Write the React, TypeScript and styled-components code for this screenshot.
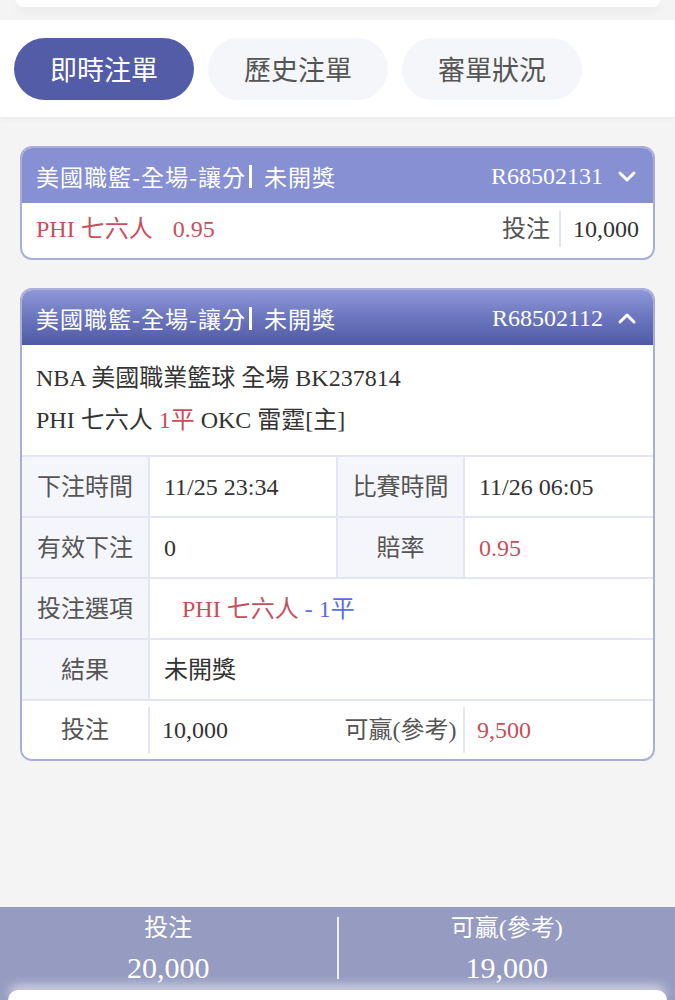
import styled, { createGlobalStyle } from 'styled-components'

const GlobalStyle = createGlobalStyle`
  * { box-sizing: border-box; }
  html, body { margin: 0; padding: 0; background: #f4f4f4; }
  body {
    font-family: "Liberation Serif", "Noto Sans CJK TC", serif;
    color: #333;
  }
`

const Page = styled.div`
  height: 1000px;
  display: flex;
  flex-direction: column;
  overflow: hidden;
  background: #f4f4f4;
`

const TopCard = styled.div`
  height: 7px;
  margin: 0 15px 13px 16px;
  background: #fff;
  border-radius: 0 0 20px 20px;
  box-shadow: 0 4px 10px rgba(0, 0, 0, 0.06);
`

const TabBar = styled.nav`
  height: 97px;
  background: #fff;
  display: flex;
  gap: 14px;
  padding: 18px 14px 0;
  box-shadow: 0 3px 6px rgba(0, 0, 0, 0.03);
`

const Tab = styled.button<{ $active?: boolean }>`
  width: 180px;
  height: 62px;
  border: none;
  border-radius: 31px;
  background: ${(p) => (p.$active ? '#535da7' : '#f5f6fa')};
  color: ${(p) => (p.$active ? '#fff' : '#555')};
  font-family: "Noto Sans CJK TC", sans-serif;
  font-size: 27px;
  line-height: 62px;
  padding: 0;
  cursor: pointer;
`

const List = styled.main`
  padding: 29px 20px 0 20px;
  display: flex;
  flex-direction: column;
  gap: 28px;
`

const Card = styled.section`
  border: 2px solid #a9aed9;
  border-radius: 12px;
  background: #fff;
  overflow: hidden;
`

const Header = styled.header<{ $open?: boolean }>`
  height: 55px;
  display: flex;
  align-items: center;
  padding: 0 14px;
  color: #fff;
  background: ${(p) =>
    p.$open ? 'linear-gradient(180deg, #8e97d8 0%, #6f79c0 45%, #4f5aa5 100%)' : '#8690d3'};
`

const Title = styled.span`
  font-family: "Noto Sans CJK TC", sans-serif;
  font-size: 23px;
  line-height: 30px;
  letter-spacing: 1px;
  flex: 1;
  white-space: nowrap;
  display: flex;
  align-items: center;
`

const Bar = styled.i`
  display: inline-block;
  width: 3px;
  height: 23px;
  background: #fff;
  margin: 2px 12px 0 3px;
`

const OrderNo = styled.span`
  font-size: 24px;
  line-height: 30px;
`

const Chevron = styled.svg`
  width: 20px;
  height: 20px;
  margin-left: 14px;
  margin-right: 2px;
`

const Summary = styled.div`
  height: 55px;
  display: flex;
  align-items: center;
  padding: 0 14px 4px;
  font-size: 24px;
  line-height: 30px;
`

const Pick = styled.span`
  color: #c64f5c;
  flex: 1;
`

const Odds = styled.span`
  margin-left: 20px;
`

const StakeLabel = styled.span`
  color: #555;
`

const VDivider = styled.span`
  width: 2px;
  height: 36px;
  background: #e2e4f3;
  margin: 0 12px 0 9px;
`

const Info = styled.div`
  height: 110px;
  padding: 12px 14px 0;
  font-size: 24px;
  line-height: 42px;
  color: #333;
`

const Red = styled.span`
  color: #c64f5c;
`

const Blue = styled.span`
  color: #5a6de6;
`

const Row = styled.div<{ $plain?: boolean }>`
  display: grid;
  grid-template-columns: 126px 190px 125px 1fr;
  height: ${(p) => (p.$plain ? '60px' : '61px')};
  border-top: 2px solid #e3e5f4;
  align-items: stretch;
  line-height: 30px;
`

const Label = styled.div<{ $plain?: boolean }>`
  display: flex;
  align-items: center;
  justify-content: center;
  background: ${(p) => (p.$plain ? '#fff' : '#f5f6fb')};
  color: #555;
  font-size: 24px;
  white-space: nowrap;
  position: relative;
`

const Value = styled.div<{ $span?: boolean; $indent?: number; $plain?: boolean; $red?: boolean }>`
  display: flex;
  align-items: center;
  padding-left: ${(p) => p.$indent ?? 14}px;
  font-size: 24px;
  color: ${(p) => (p.$red ? '#c64f5c' : '#333')};
  grid-column: ${(p) => (p.$span ? '2 / 5' : 'auto')};
  border-left: ${(p) => (p.$plain ? 'none' : '2px solid #e3e5f4')};
  border-right: ${(p) => (p.$plain ? 'none' : '2px solid #e3e5f4')};
  position: relative;
  white-space: nowrap;
  &:last-child {
    border-right: none;
  }
  ${(p) =>
    p.$plain &&
    `
    &::before {
      content: '';
      position: absolute;
      left: 0;
      top: 6px;
      bottom: 6px;
      width: 2px;
      background: #e3e5f4;
    }
  `}
`

const Spacer = styled.div`
  flex: 1;
`

const Footer = styled.footer`
  height: 93px;
  background: #959bc1;
  display: flex;
  flex-direction: column;
`

const Totals = styled.div`
  height: 83px;
  display: grid;
  grid-template-columns: 1fr 2px 1fr;
  color: #fff;
`

const Total = styled.div`
  display: flex;
  flex-direction: column;
  align-items: center;
  padding-top: 6px;
  gap: 4px;
`

const TotalLabel = styled.span`
  font-size: 24px;
  line-height: 30px;
`

const TotalValue = styled.span`
  font-size: 30px;
  line-height: 42px;
`

const TotalDivider = styled.span`
  width: 2px;
  margin-top: 10px;
  height: 62px;
  background: rgba(255, 255, 255, 0.85);
`

const Dock = styled.div`
  flex: 1;
  margin: 0 8px;
  background: #fff;
  border-radius: 22px 22px 0 0;
  box-shadow: 0 -4px 12px rgba(255, 255, 255, 0.7);
`

const ChevronIcon = ({ up }: { up?: boolean }) => (
  <Chevron viewBox="0 0 20 20" fill="none" stroke="#fff" strokeWidth="3" strokeLinecap="round" strokeLinejoin="round">
    <polyline points={up ? '3,14 10,7 17,14' : '3,7 10,14 17,7'} />
  </Chevron>
)

const App = () => {
  return (
    <>
      <GlobalStyle />
      <Page>
        <TopCard />
        <TabBar>
          <Tab $active>即時注單</Tab>
          <Tab>歷史注單</Tab>
          <Tab>審單狀況</Tab>
        </TabBar>

        <List>
          <Card>
            <Header>
              <Title>
                美國職籃-全場-讓分<Bar />未開獎
              </Title>
              <OrderNo>R68502131</OrderNo>
              <ChevronIcon />
            </Header>
            <Summary>
              <Pick>
                PHI 七六人<Odds>0.95</Odds>
              </Pick>
              <StakeLabel>投注</StakeLabel>
              <VDivider />
              <span>10,000</span>
            </Summary>
          </Card>

          <Card>
            <Header $open>
              <Title>
                美國職籃-全場-讓分<Bar />未開獎
              </Title>
              <OrderNo>R68502112</OrderNo>
              <ChevronIcon up />
            </Header>
            <Info>
              <div>NBA 美國職業籃球 全場 BK237814</div>
              <div>
                PHI 七六人 <Red>1平</Red> OKC 雷霆[主]
              </div>
            </Info>
            <Row>
              <Label>下注時間</Label>
              <Value>11/25 23:34</Value>
              <Label>比賽時間</Label>
              <Value>11/26 06:05</Value>
            </Row>
            <Row>
              <Label>有效下注</Label>
              <Value>0</Value>
              <Label>賠率</Label>
              <Value $red>0.95</Value>
            </Row>
            <Row>
              <Label>投注選項</Label>
              <Value $span $indent={32}>
                <Red>PHI 七六人</Red>
                <Blue>&nbsp;- 1平</Blue>
              </Value>
            </Row>
            <Row>
              <Label>結果</Label>
              <Value $span>未開獎</Value>
            </Row>
            <Row $plain>
              <Label $plain>投注</Label>
              <Value $plain>10,000</Value>
              <Label $plain>可贏(參考)</Label>
              <Value $plain $red>9,500</Value>
            </Row>
          </Card>
        </List>

        <Spacer />

        <Footer>
          <Totals>
            <Total>
              <TotalLabel>投注</TotalLabel>
              <TotalValue>20,000</TotalValue>
            </Total>
            <TotalDivider />
            <Total>
              <TotalLabel>可贏(參考)</TotalLabel>
              <TotalValue>19,000</TotalValue>
            </Total>
          </Totals>
          <Dock />
        </Footer>
      </Page>
    </>
  )
}

export default App
